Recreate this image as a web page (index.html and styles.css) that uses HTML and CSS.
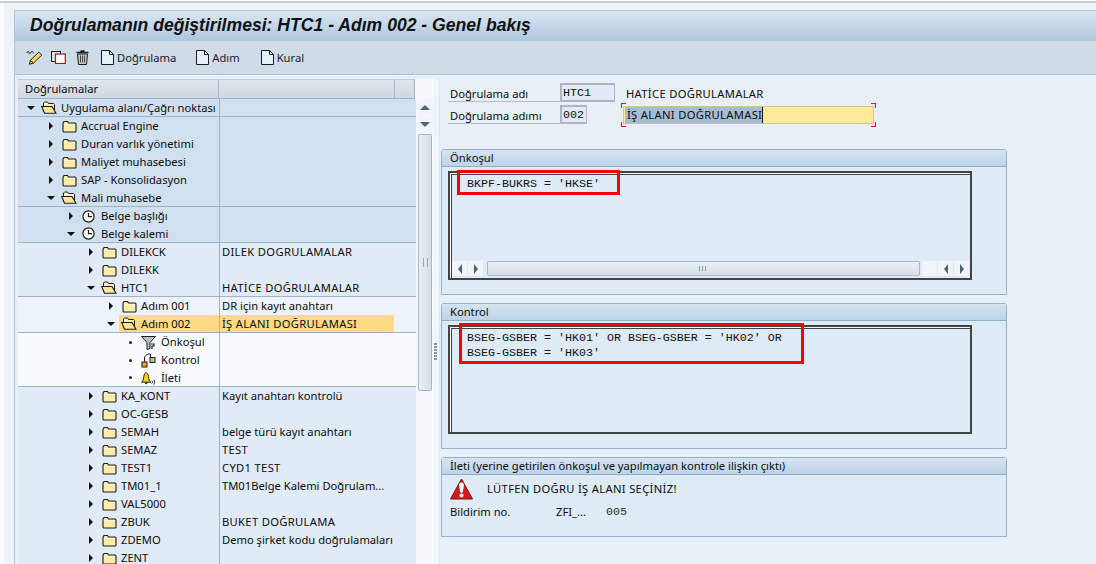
FILE: index.html
```html
<!DOCTYPE html>
<html lang="tr">
<head>
<meta charset="utf-8">
<title>Doğrulamanın değiştirilmesi</title>
<link rel="stylesheet" href="styles.css">
</head>
<body>
<svg class="defs" width="0" height="0">
  <symbol id="fc" viewBox="0 0 15 13"><path d="M1 3l1-1.500h3.500l1 1.500H13q1 0 1 1v7q0 1-1 1H2q-1 0-1-1z" fill="#fdeba8" stroke="#1c1c1c" stroke-width="1.100"/><path d="M2 4.500h11" stroke="#fff9dc"/></symbol>
  <symbol id="fo" viewBox="0 0 16 13"><path d="M2.500 4V2l1-1h3l1 1.500h5l1 1v7h-11z" fill="#fff3c4" stroke="#1c1c1c"/><path d="M.7 5.500h10.300l4 6.800H3.500z" fill="#fde69c" stroke="#1c1c1c" stroke-width="1.100"/></symbol>
  <symbol id="clock" viewBox="0 0 13 13"><circle cx="6.500" cy="6.500" r="5.600" fill="#fff" stroke="#1c1c1c" stroke-width="1.200"/><path d="M6.500 3v3.700H10" fill="none" stroke="#1c1c1c" stroke-width="1.200"/></symbol>
  <symbol id="doc" viewBox="0 0 13 15"><path d="M.5.500h8l4 4v10H.5z" fill="#e4f0fa" stroke="#1c1c1c"/><path d="M8.500.500v4h4z" fill="#fff" stroke="#1c1c1c"/></symbol>
</svg>
<div class="page">
<div class="app">
  <header class="title-bar"><h1>Doğrulamanın değiştirilmesi: HTC1 - Adım 002 - Genel bakış</h1></header>
  <nav class="toolbar">
    <svg class="t-pencil" width="17" height="15" viewBox="0 0 17 15"><path d="M3.500 14.300l.8-4L12.800 2.200l3 2.800-8.300 8z" fill="#ffd75e" stroke="#1c1c1c"/><path d="M4.300 10.300l3.200 2.700" stroke="#1c1c1c"/><path d="M.7 3c.8-2 2.200-2 2.300-.5s1 2 2-.2 2-.7 2.500 1" fill="none" stroke="#1c1c1c"/></svg>
    <svg class="t-copy" width="15" height="13" viewBox="0 0 15 13"><rect x=".5" y=".5" width="9" height="10" fill="#dfe6ee" stroke="#1c1c1c"/><rect x="4.500" y="3" width="9.800" height="9.500" fill="#fff" stroke="#a01818" stroke-width="1.200"/></svg>
    <svg class="t-trash" width="13" height="15" viewBox="0 0 13 15"><path d="M4.500 1h4M.5 2.500h12" stroke="#1c1c1c" stroke-width="1.400"/><path d="M1.500 4h10l-1 10.500h-8z" fill="#c8c8c8" stroke="#1c1c1c"/><path d="M4.500 5.500v7M6.500 5.500v7M8.500 5.500v7" stroke="#444"/></svg>
    <a class="tool-btn b1"><svg width="13" height="15"><use href="#doc"/></svg>Doğrulama</a>
    <a class="tool-btn b2"><svg width="13" height="15"><use href="#doc"/></svg>Adım</a>
    <a class="tool-btn b3"><svg width="13" height="15"><use href="#doc"/></svg>Kural</a>
  </nav>
  <main class="workspace">
    <section class="tree">
      <div class="tree-head"><span class="h1">Doğrulamalar</span><span class="h2"></span><span class="h3"></span></div>
      <div class="tree-body">
        <div class="rows">
          <div class="group g1 line">
            <div class="row l0"><i class="tw open"></i><svg width="16" height="13"><use href="#fo"/></svg><span class="nm">Uygulama alanı/Çağrı noktası</span></div>
          </div>
          <div class="group g1 line">
            <div class="row l1"><i class="tw"></i><svg width="15" height="13"><use href="#fc"/></svg><span class="nm">Accrual Engine</span></div>
            <div class="row l1"><i class="tw"></i><svg width="15" height="13"><use href="#fc"/></svg><span class="nm">Duran varlık yönetimi</span></div>
            <div class="row l1"><i class="tw"></i><svg width="15" height="13"><use href="#fc"/></svg><span class="nm">Maliyet muhasebesi</span></div>
            <div class="row l1"><i class="tw"></i><svg width="15" height="13"><use href="#fc"/></svg><span class="nm">SAP - Konsolidasyon</span></div>
            <div class="row l1"><i class="tw open"></i><svg width="16" height="13"><use href="#fo"/></svg><span class="nm">Mali muhasebe</span></div>
          </div>
          <div class="group g1 line">
            <div class="row l2"><i class="tw"></i><svg width="13" height="13"><use href="#clock"/></svg><span class="nm nm-c">Belge başlığı</span></div>
            <div class="row l2"><i class="tw open"></i><svg width="13" height="13"><use href="#clock"/></svg><span class="nm nm-c">Belge kalemi</span></div>
          </div>
          <div class="group g2 line">
            <div class="row l3"><i class="tw"></i><svg width="15" height="13"><use href="#fc"/></svg><span class="nm">DILEKCK</span><span class="ds caps">DILEK DOGRULAMALAR</span></div>
            <div class="row l3"><i class="tw"></i><svg width="15" height="13"><use href="#fc"/></svg><span class="nm">DILEKK</span></div>
            <div class="row l3"><i class="tw open"></i><svg width="16" height="13"><use href="#fo"/></svg><span class="nm">HTC1</span><span class="ds caps">HATİCE DOĞRULAMALAR</span></div>
          </div>
          <div class="group g3 line">
            <div class="row l4"><i class="tw"></i><svg width="15" height="13"><use href="#fc"/></svg><span class="nm">Adım 001</span><span class="ds">DR için kayıt anahtarı</span></div>
            <div class="row l4"><i class="tw open"></i><span class="sel-band"><svg width="16" height="13"><use href="#fo"/></svg><span class="nm">Adım 002</span><span class="ds caps">İŞ ALANI DOĞRULAMASI</span></span></div>
          </div>
          <div class="group g4 line">
            <div class="row l5"><i class="dot"></i><svg width="15" height="15" viewBox="0 0 15 15"><path d="M.5 1.500h14l-5.500 6v6l-3 1v-7z" fill="#b8bfc8" stroke="#1c1c1c"/><path d="M10 9h3v2h-2v3" fill="none" stroke="#1c1c1c" stroke-width="1.200"/></svg><span class="nm">Önkoşul</span></div>
            <div class="row l5"><i class="dot"></i><svg width="15" height="15" viewBox="0 0 15 15"><rect x="1" y="9" width="5" height="5" fill="#f2a020" stroke="#1c1c1c"/><rect x="9" y="4.500" width="5" height="5" fill="#b7cc80" stroke="#1c1c1c"/><path d="M3.500 9V4l3-3h3v3" fill="none" stroke="#1c1c1c"/></svg><span class="nm">Kontrol</span></div>
            <div class="row l5"><i class="dot"></i><svg width="15" height="15" viewBox="0 0 16 15"><path d="M.5 12.500c2-1 2-3 2.500-6s1.500-4 2.500-4 2 1 2.500 4 .5 5 2.500 6z" fill="#f5d020" stroke="#1c1c1c"/><path d="M4 13c1 1.500 2.500 1.500 3 0" fill="#1c1c1c" stroke="#1c1c1c"/><path d="M11.500 11c1 .8 1 2 0 3M13.500 10c1.500 1.500 1.500 3.500 0 5" fill="none" stroke="#1c1c1c"/></svg><span class="nm">İleti</span></div>
          </div>
          <div class="group g2">
            <div class="row l3"><i class="tw"></i><svg width="15" height="13"><use href="#fc"/></svg><span class="nm">KA_KONT</span><span class="ds">Kayıt anahtarı kontrolü</span></div>
            <div class="row l3"><i class="tw"></i><svg width="15" height="13"><use href="#fc"/></svg><span class="nm">OC-GESB</span></div>
            <div class="row l3"><i class="tw"></i><svg width="15" height="13"><use href="#fc"/></svg><span class="nm">SEMAH</span><span class="ds">belge türü kayıt anahtarı</span></div>
            <div class="row l3"><i class="tw"></i><svg width="15" height="13"><use href="#fc"/></svg><span class="nm">SEMAZ</span><span class="ds caps">TEST</span></div>
            <div class="row l3"><i class="tw"></i><svg width="15" height="13"><use href="#fc"/></svg><span class="nm">TEST1</span><span class="ds caps">CYD1 TEST</span></div>
            <div class="row l3"><i class="tw"></i><svg width="15" height="13"><use href="#fc"/></svg><span class="nm">TM01_1</span><span class="ds">TM01Belge Kalemi Doğrulam...</span></div>
            <div class="row l3"><i class="tw"></i><svg width="15" height="13"><use href="#fc"/></svg><span class="nm">VAL5000</span></div>
            <div class="row l3"><i class="tw"></i><svg width="15" height="13"><use href="#fc"/></svg><span class="nm">ZBUK</span><span class="ds caps">BUKET DOĞRULAMA</span></div>
            <div class="row l3"><i class="tw"></i><svg width="15" height="13"><use href="#fc"/></svg><span class="nm">ZDEMO</span><span class="ds">Demo şirket kodu doğrulamaları</span></div>
            <div class="row l3"><i class="tw"></i><svg width="15" height="13"><use href="#fc"/></svg><span class="nm">ZENT</span></div>
          </div>
        </div>
        <div class="vscroll">
          <span class="vbtn"><i class="arr up"></i></span>
          <span class="vbtn"><i class="arr down"></i></span>
          <span class="vthumb"><span class="grip-v"></span></span>
        </div>
      </div>
    </section>
    <div class="sash"><span class="grip"></span></div>
    <section class="detail">
      <div class="form">
        <div class="frow">
          <label>Doğrulama adı</label><span class="fld w55">HTC1</span><span class="desc caps">HATİCE DOĞRULAMALAR</span>
        </div>
        <div class="frow">
          <label>Doğrulama adımı</label><span class="fld w27">002</span>
          <span class="focus"><span class="inp"><span class="selected caps">İŞ ALANI DOĞRULAMASI</span></span><i class="c tl"></i><i class="c tr"></i><i class="c bl"></i><i class="c br"></i></span>
        </div>
      </div>
      <div class="panel p1">
        <div class="phead">Önkoşul</div>
        <div class="pbody">
          <div class="code">
            <pre>BKPF-BUKRS = 'HKSE'</pre>
            <div class="hbar"><span class="hb"><i class="arr left"></i></span><span class="hb"><i class="arr right"></i></span><span class="track"><span class="grip-h"></span></span><span class="hb"></span><span class="hb"><i class="arr left"></i></span><span class="hb"><i class="arr right"></i></span></div>
          </div>
          <span class="mark m1"></span>
        </div>
      </div>
      <div class="panel p2">
        <div class="phead">Kontrol</div>
        <div class="pbody">
          <div class="code">
            <pre>BSEG-GSBER = 'HK01' OR BSEG-GSBER = 'HK02' OR
BSEG-GSBER = 'HK03'</pre>
          </div>
          <span class="mark m2"></span>
        </div>
      </div>
      <div class="panel p3">
        <div class="phead">İleti (yerine getirilen önkoşul ve yapılmayan kontrole ilişkin çıktı)</div>
        <div class="pbody msg">
          <div class="msg-line"><svg width="23" height="22" viewBox="0 0 23 22"><path d="M11.500 1L22.500 21H.5z" fill="#d81818" stroke="#7a1010" stroke-linejoin="round"/><path d="M11.500 4.500c-2 0-2.600 1.200-2.300 3.500l1 6.500h2.600l1-6.500c.3-2.300-.3-3.500-2.300-3.500z" fill="#fff"/><circle cx="11.500" cy="17.500" r="2" fill="#fff"/></svg><span class="caps">LÜTFEN DOĞRU İŞ ALANI SEÇİNİZ!</span></div>
          <div class="msg-no"><span class="no-l">Bildirim no.</span><span class="no-v">ZFI_...</span><span class="no-n">005</span></div>
        </div>
      </div>
    </section>
  </main>
</div>
</div>
</body>
</html>
```
FILE: styles.css
```css
* { box-sizing: border-box; }
html, body { margin: 0; height: 564px; overflow: hidden; }
body { background: #eef3f9; font: 11.200px/18px "Noto Sans", "Liberation Sans", sans-serif; color: #0c0c0c; border-top: 1px solid #fff; }
.defs { position: absolute; }
.caps { letter-spacing: .33px; }
.page { height: 563px; border-top: 2px solid #c9ccd1; padding: 7px 0 0 14px; display: flex; background: linear-gradient(90deg, #f8fafd 4px, #eef3f9 4px); }
.app { flex: 1; min-width: 0; background: #e8eff7; border-left: 1px solid #b0c4d8; display: flex; flex-direction: column; overflow: hidden; }
.title-bar { height: 31px; flex: none; background: linear-gradient(#dbe7f3, #aec6dc); border-top: 1px solid #b7c9da; padding-left: 15px; }
.title-bar h1 { margin: 0; font: italic bold 17.600px/29px "Liberation Sans", sans-serif; color: #111; white-space: nowrap; }
.toolbar { height: 34px; flex: none; background: #cfdce8; border-bottom: 1px solid #b0c4d8; display: flex; align-items: center; padding-left: 11px; color: #14202e; }
.t-copy { margin-left: 8px; flex: none; }
.t-trash { margin-left: 10px; flex: none; }
.t-pencil { flex: none; }
.tool-btn { display: flex; align-items: center; gap: 3px; }
.b1 { margin-left: 12px; }
.b2 { margin-left: 20px; }
.b3 { margin-left: 21px; }
.workspace { flex: 1; display: flex; min-height: 0; padding-left: 3px; }
.tree { width: 416px; margin-top: 4px; flex: none; display: flex; flex-direction: column; background: #f6f9fc; }
.tree-head { height: 20px; flex: none; display: flex; }
.tree-head span { background: linear-gradient(#dfe6ed, #cfd8e1); border-right: 1px solid #a9b6c3; border-bottom: 1px solid #9fb2c6; border-top: 1px solid #c0cbd6; padding-left: 7px; line-height: 18px; }
.h1 { width: 201px; }
.h2 { width: 176px; }
.h3 { width: 20px; }
.tree-body { flex: 1; display: flex; min-height: 0; overflow: hidden; }
.rows { width: 398px; flex: none; background: #e0ebf7; }
.line { border-bottom: 1px solid #9db3c9; }
.g1 { background: #d0e0f0; }
.g2 { background: #e0ebf7; }
.g3 { background: #edf3fb; }
.g4 { background: #f8fbff; }
.row { height: 18px; display: flex; align-items: center; white-space: nowrap; position: relative; background: linear-gradient(90deg, transparent 201px, #9db3c9 201px, #9db3c9 202px, transparent 202px); }
.line .row:last-child { height: 17px; }
.nm { margin-left: 4px; }
.row > svg { flex: none; }
.nm-c { margin-left: 6px; }
.l5 .nm { margin-left: 5px; }
.ds { position: absolute; left: 204px; top: 0; }
.tw { width: 0; height: 0; flex: none; border-style: solid; border-width: 4px 0 4px 4px; border-color: transparent transparent transparent #111; margin-right: 9px; }
.tw.open { border-width: 4px 4px 0 4px; border-color: #111 transparent transparent transparent; margin-right: 6px; margin-left: -2px; }
.l2 .tw.open { margin-right: 7px; }
.dot { width: 3px; height: 3px; flex: none; border-radius: 50%; background: #222; margin-right: 9px; }
.l0 { padding-left: 11px; }
.l1 { padding-left: 31px; }
.l2 { padding-left: 51px; }
.l3 { padding-left: 71px; }
.l4 { padding-left: 91px; }
.l5 { padding-left: 111px; }
.sel-band { position: absolute; left: 101px; top: 0; width: 275px; height: 17px; background: linear-gradient(90deg, #fddb84 100px, #9db3c9 100px, #9db3c9 101px, #fddb84 101px); padding-left: 2px; display: flex; align-items: center; }
.sel-band .ds { left: 103px; }
.vscroll { width: 18px; flex: none; background: #f6f9fc; display: flex; flex-direction: column; align-items: center; gap: 1px; }
.vbtn { width: 16px; height: 16px; background: #f1f5fa; display: flex; align-items: center; justify-content: center; flex: none; }
.vthumb { width: 14px; height: 257px; margin-top: 1px; flex: none; border: 1px solid #aab7c4; border-radius: 2px; background: linear-gradient(90deg, #e9eff5, #d5dfe8); display: flex; align-items: center; justify-content: center; }
.grip-v { width: 5px; height: 9px; background: repeating-linear-gradient(90deg, #9aa8b6 0 1px, transparent 1px 4px); }
.arr { display: block; width: 0; height: 0; border-style: solid; }
.arr.up { border-width: 0 5px 5px; border-color: transparent transparent #4f6478; }
.arr.down { border-width: 5px 5px 0; border-color: #4f6478 transparent transparent; }
.arr.left { border-width: 5px 4px 5px 0; border-color: transparent #4f6478 transparent transparent; }
.arr.right { border-width: 5px 0 5px 4px; border-color: transparent transparent transparent #4f6478; }
.sash { width: 6px; flex: none; margin-top: 4px; background: #f1f5fa; padding-top: 264px; border-right: 1px solid #dde6ef; }
.grip { display: block; width: 3px; height: 18px; background: repeating-linear-gradient(#8a9aaa 0 2px, transparent 2px 3px); }
.detail { flex: 1; min-width: 0; background: #e8eff7; padding-top: 8px; }
.form { margin-left: 8px; display: flex; flex-direction: column; gap: 3px; height: 66px; }
.frow { display: flex; align-items: flex-start; height: 19px; }
.frow label { width: 112px; height: 19px; line-height: 21px; padding-left: 2px; border-bottom: 1px solid #b4bcc4; flex: none; }
.fld { height: 19px; font: 11.670px/17px "Liberation Mono", monospace; border: 1px solid #aeb6be; border-width: 2px 1px 2px 2px; background: #e0ebf7; padding-left: 1px; flex: none; color: #111; }
.w55 { width: 55px; }
.w27 { width: 27px; }
.desc { margin-left: 11px; line-height: 21px; }
.focus { position: relative; margin-left: 34px; margin-top: -2px; width: 255px; height: 24px; padding: 3px 2px; flex: none; }
.inp { display: block; height: 18px; background: #ffe99b; border: 1px solid #cfc78a; padding-left: 1px; line-height: 16px; }
.selected { background: #a6bcd4; border-right: 1px solid #111; padding-left: 2px; display: inline-block; }
.c { position: absolute; width: 5px; height: 5px; border: 0 solid #d81818; }
.tl { left: 0; top: 0; border-width: 1px 0 0 1px; }
.tr { right: 0; top: 0; border-width: 1px 1px 0 0; }
.bl { left: 0; bottom: 0; border-width: 0 0 1px 1px; }
.br { right: 0; bottom: 0; border-width: 0 1px 1px 0; }
.panel { margin: 0 0 8px 1px; width: 566px; border: 1px solid #95b3d0; border-top-left-radius: 3px; border-top-right-radius: 3px; background: #deeaf5; }
.phead { height: 17px; line-height: 16px; padding-left: 8px; background: linear-gradient(#d6e4f1, #bcd3e8); border-bottom: 1px solid #8facc8; white-space: nowrap; }
.pbody { position: relative; padding: 4px 0 0 6px; }
.p1, .p2 { height: 146px; }
.p3 { height: 80px; }
.code { width: 524px; height: 109px; border: 2px solid #444; background: #deeaf5; box-shadow: inset 1px 1px 0 #f4f7fb, inset 2px 2px 0 #444; position: relative; padding: 4px 0 0 17px; }
.code pre { margin: 0; font: 11.670px/15px "Liberation Mono", monospace; color: #111; }
.hbar { position: absolute; left: 2px; right: 2px; bottom: 2px; height: 15px; display: flex; gap: 1px; align-items: stretch; }
.hb { width: 15px; background: #f1f5fa; display: flex; align-items: center; justify-content: center; flex: none; }
.track { width: 433px; margin: 0 1px 0 3px; border: 1px solid #aab7c4; border-radius: 2px; background: linear-gradient(#e9eff5, #d5dfe8); display: flex; align-items: center; justify-content: center; flex: none; }
.grip-h { width: 9px; height: 5px; background: repeating-linear-gradient(90deg, #8a9aaa 0 1px, transparent 1px 3px); }
.mark { position: absolute; border: 3px solid #fa0000; pointer-events: none; }
.m1 { left: 15px; top: 3px; width: 163px; height: 25px; }
.m2 { left: 17px; top: 2px; width: 345px; height: 41px; }
.msg { padding: 2px 0 0 8px; }
.msg-line { display: flex; align-items: center; height: 24px; gap: 14px; }
.msg-no { display: flex; height: 18px; margin-top: 2px; align-items: center; }
.no-l { width: 106px; }
.no-v { width: 50px; }
.no-n { font: 11.670px/15px "Liberation Mono", monospace; color: #333; }
```
